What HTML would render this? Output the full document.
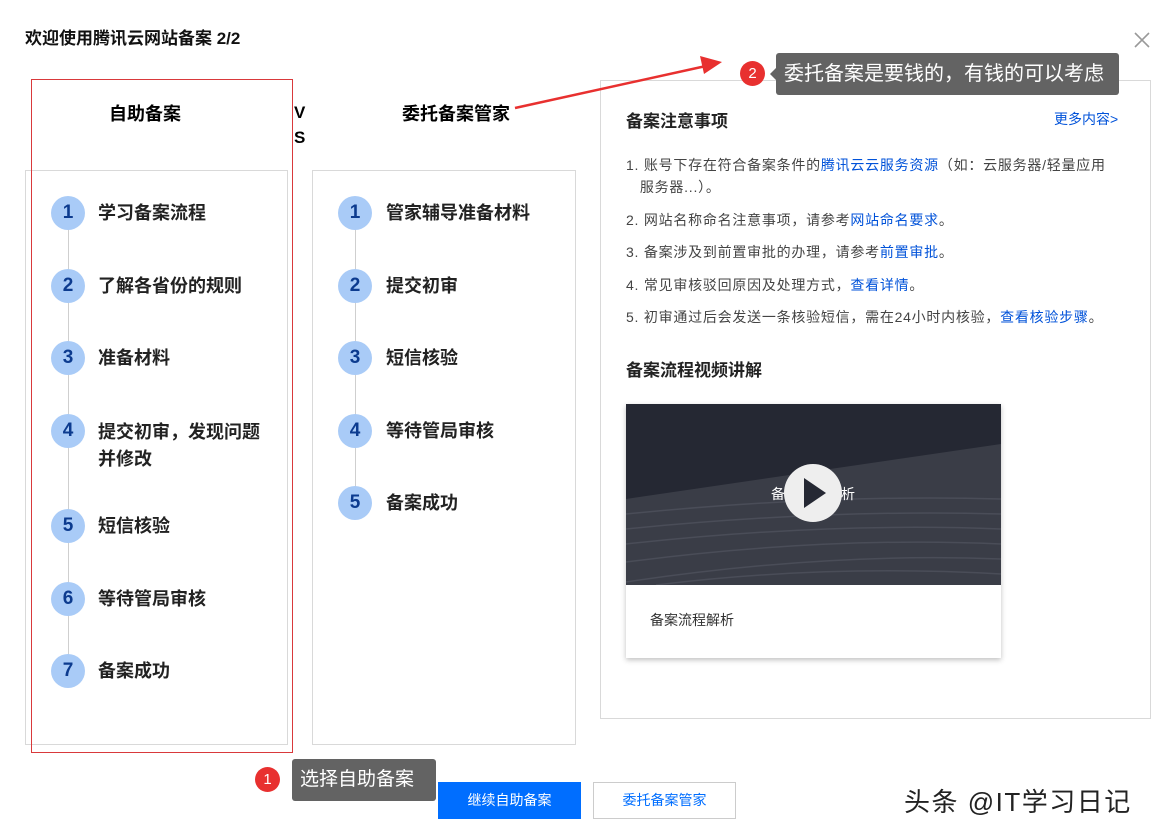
<!DOCTYPE html>
<html><head><meta charset="utf-8"><style>
*{margin:0;padding:0;box-sizing:border-box}
body{width:1169px;height:839px;background:#fff;position:relative;overflow:hidden;font-family:"Liberation Sans","Noto Sans CJK SC",sans-serif;color:#000}
.a{position:absolute}
.box{position:absolute;border:1px solid #d9d9d9}
.step{position:absolute;font-size:18px;font-weight:bold;color:#222;line-height:24px}
.c{position:absolute;width:34px;height:34px;border-radius:50%;background:#a9cbf7;color:#0c3b8f;font-size:19px;font-weight:bold;text-align:center;line-height:34px}
.line{position:absolute;width:1px;background:#cfcfcf}
.n{position:absolute;left:626px;font-size:14px;color:#444;line-height:22px;letter-spacing:0.75px}
.n b{font-weight:normal;color:#0052d9}
</style></head><body>
<div class="a" style="left:25px;top:24px;font-size:17px;font-weight:bold;color:#111">欢迎使用腾讯云网站备案 2/2</div>
<svg class="a" style="left:1134px;top:32px" width="16" height="16"><path d="M1 1L15 15M15 1L1 15" stroke="#999" stroke-width="1.6"/></svg>

<div class="a" style="left:109px;top:100px;font-size:18px;font-weight:bold">自助备案</div>
<div class="a" style="left:294px;top:100px;font-size:17px;font-weight:bold;line-height:25px">V<br>S</div>
<div class="a" style="left:402px;top:100px;font-size:18px;font-weight:bold">委托备案管家</div>

<div class="box" style="left:25px;top:170px;width:263px;height:575px"></div>
<div class="box" style="left:312px;top:170px;width:264px;height:575px"></div>
<div class="box" style="left:600px;top:80px;width:551px;height:639px"></div>

<div class="line" style="left:68px;top:213px;height:458px"></div>
<div class="line" style="left:355px;top:213px;height:290px"></div>

<div class="c" style="left:51px;top:196px">1</div><div class="step" style="left:98px;top:201px">学习备案流程</div>
<div class="c" style="left:51px;top:269px">2</div><div class="step" style="left:98px;top:274px">了解各省份的规则</div>
<div class="c" style="left:51px;top:341px">3</div><div class="step" style="left:98px;top:346px">准备材料</div>
<div class="c" style="left:51px;top:414px">4</div><div class="step" style="left:98px;top:419px;line-height:27px">提交初审，发现问题<br>并修改</div>
<div class="c" style="left:51px;top:509px">5</div><div class="step" style="left:98px;top:514px">短信核验</div>
<div class="c" style="left:51px;top:582px">6</div><div class="step" style="left:98px;top:587px">等待管局审核</div>
<div class="c" style="left:51px;top:654px">7</div><div class="step" style="left:98px;top:659px">备案成功</div>

<div class="c" style="left:338px;top:196px">1</div><div class="step" style="left:386px;top:201px">管家辅导准备材料</div>
<div class="c" style="left:338px;top:269px">2</div><div class="step" style="left:386px;top:274px">提交初审</div>
<div class="c" style="left:338px;top:341px">3</div><div class="step" style="left:386px;top:346px">短信核验</div>
<div class="c" style="left:338px;top:414px">4</div><div class="step" style="left:386px;top:419px">等待管局审核</div>
<div class="c" style="left:338px;top:486px">5</div><div class="step" style="left:386px;top:491px">备案成功</div>

<div class="a" style="left:31px;top:79px;width:262px;height:674px;border:1px solid #d9393b"></div>

<div class="a" style="left:626px;top:107px;font-size:17px;font-weight:bold;color:#222">备案注意事项</div>
<div class="a" style="left:1054px;top:109px;font-size:14px;color:#0052d9">更多内容&gt;</div>
<div class="n" style="top:154px">1. 账号下存在符合备案条件的<b>腾讯云云服务资源</b>（如：云服务器/轻量应用<br>&nbsp;&nbsp;&nbsp;服务器...）。</div>
<div class="n" style="top:209px">2. 网站名称命名注意事项，请参考<b>网站命名要求</b>。</div>
<div class="n" style="top:241px">3. 备案涉及到前置审批的办理，请参考<b>前置审批</b>。</div>
<div class="n" style="top:274px">4. 常见审核驳回原因及处理方式，<b>查看详情</b>。</div>
<div class="n" style="top:306px">5. 初审通过后会发送一条核验短信，需在24小时内核验，<b>查看核验步骤</b>。</div>
<div class="a" style="left:626px;top:356px;font-size:17px;font-weight:bold;color:#222">备案流程视频讲解</div>

<div class="a" style="left:626px;top:404px;width:375px;height:254px;box-shadow:0 2px 5px rgba(0,0,0,.25);background:#fff">
<svg width="375" height="181" style="display:block">
<rect width="375" height="181" fill="#252833"/>
<path d="M0 95 L375 40 L375 181 L0 181Z" fill="#3a3d47"/>
<g fill="none" stroke="#4a4d58" stroke-width="1.5">
<path d="M0 110 Q200 90 375 95"/><path d="M0 125 Q200 105 375 110"/><path d="M0 140 Q200 118 375 125"/><path d="M0 158 Q200 132 375 140"/><path d="M0 178 Q200 148 375 155"/><path d="M30 181 Q200 160 375 170"/>
</g>
<text x="187" y="95" fill="#fff" font-size="14" text-anchor="middle" font-family="Liberation Sans,Noto Sans CJK SC,sans-serif">备案流程解析</text>
<circle cx="187" cy="89" r="29" fill="#eeeeee"/>
<path d="M178 74 L200 89 L178 104Z" fill="#252833"/>
</svg>
<div style="position:absolute;left:24px;top:206px;font-size:14px;color:#333">备案流程解析</div>
</div>

<svg class="a" style="left:0;top:0" width="1169" height="839">
<line x1="515" y1="108" x2="706" y2="66" stroke="#e8302f" stroke-width="2.5"/>
<path d="M722 62 L700 56 L704 74Z" fill="#e8302f"/>
</svg>
<div class="a" style="left:740px;top:61px;width:25px;height:25px;border-radius:50%;background:#e8302f;color:#fff;font-size:15px;text-align:center;line-height:25px">2</div>
<div class="a" style="left:776px;top:53px;width:343px;height:42px;background:#636363;border-radius:3px;color:#fff;font-size:20px;line-height:42px;padding-left:8px">委托备案是要钱的，有钱的可以考虑</div>
<div class="a" style="left:770px;top:68px;border:6px solid transparent;border-right-color:#636363;border-left:0"></div>

<div class="a" style="left:255px;top:767px;width:25px;height:25px;border-radius:50%;background:#e8302f;color:#fff;font-size:15px;text-align:center;line-height:25px">1</div>
<div class="a" style="left:292px;top:759px;width:144px;height:42px;background:#636363;border-radius:3px;color:#fff;font-size:19px;line-height:42px;padding-left:8px">选择自助备案</div>

<div class="a" style="left:438px;top:782px;width:143px;height:37px;background:#006eff;color:#fff;font-size:14px;text-align:center;line-height:37px">继续自助备案</div>
<div class="a" style="left:593px;top:782px;width:143px;height:37px;border:1px solid #ccc;color:#006eff;font-size:14px;text-align:center;line-height:35px">委托备案管家</div>

<div class="a" style="left:904px;top:782px;font-size:26px;color:#222;letter-spacing:1.5px">头条 @IT学习日记</div>
</body></html>
